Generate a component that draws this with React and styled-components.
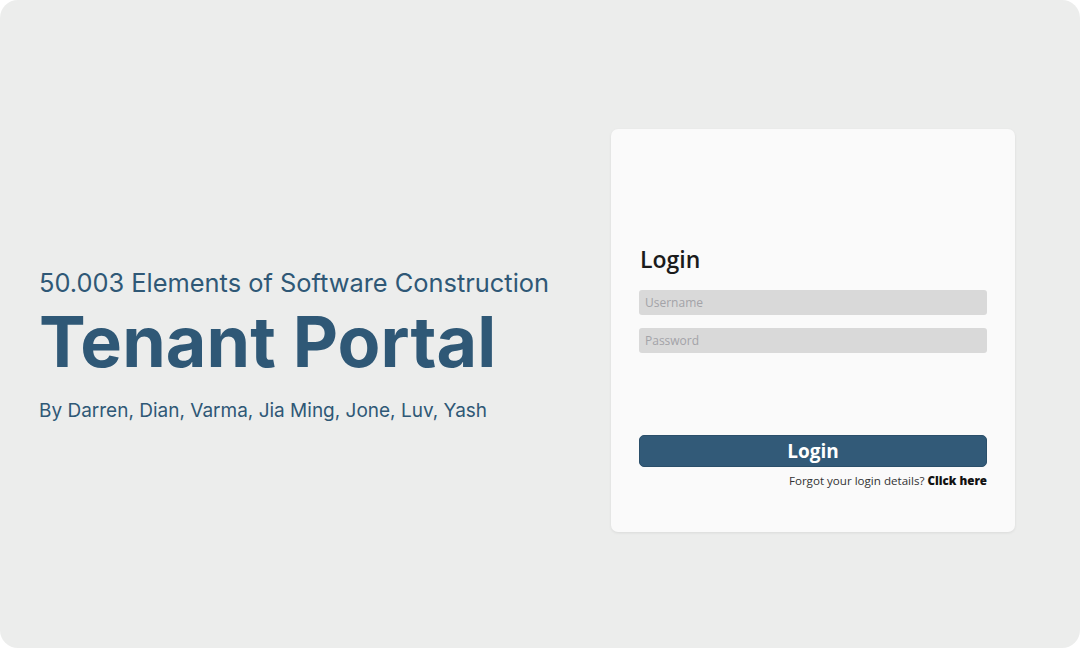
import React from 'react';
import styled, { createGlobalStyle } from 'styled-components';

const GlobalStyle = createGlobalStyle`
  html, body {
    margin: 0;
    padding: 0;
    background: #ffffff;
  }
  * {
    box-sizing: border-box;
  }
`;

const Page = styled.div`
  width: 1080px;
  height: 648px;
  background: #ecedec;
  border-radius: 18px;
  display: flex;
  align-items: center;
  justify-content: space-between;
  padding: 0 65px 0 39px;
  font-family: Inter, 'Liberation Sans', sans-serif;
  color: #2f5876;
`;

const Intro = styled.div`
  display: flex;
  flex-direction: column;
  margin-top: 48px;
`;

const Course = styled.div`
  font-size: 25.4px;
  line-height: 30px;
  margin-top: -6px;
`;

const Title = styled.h1`
  margin: 2px 0 0 0;
  font-size: 70px;
  line-height: 84px;
  font-weight: 700;
  letter-spacing: 0.1px;
`;

const Authors = styled.div`
  margin-top: 15px;
  font-size: 19px;
  line-height: 24px;
`;

const Card = styled.div`
  width: 404px;
  height: 403px;
  margin-top: 12px;
  background: #fafafa;
  border-radius: 7px;
  box-shadow: 0 1px 3px rgba(0, 0, 0, 0.08);
  padding: 115px 28px 0 28px;
  display: flex;
  flex-direction: column;
  font-family: 'Open Sans', 'Noto Sans', sans-serif;
`;

const Heading = styled.h2`
  margin: 0 0 16px 1px;
  font-size: 23px;
  line-height: 30px;
  font-weight: 600;
  color: #1b1b1b;
`;

const Field = styled.input`
  width: 100%;
  height: 25px;
  border: none;
  border-radius: 3px;
  background: #d9d9d9;
  padding: 0 6px;
  margin-bottom: ${p => p.$gap}px;
  font-family: 'Open Sans', 'Noto Sans', sans-serif;
  font-size: 12px;
  outline: none;
  &::placeholder {
    color: #a3a3a8;
  }
`;

const Button = styled.button`
  width: 100%;
  height: 32px;
  border: 1px solid #2b4f6a;
  border-radius: 5px;
  background: #325a78;
  color: #ffffff;
  font-family: 'Open Sans', 'Noto Sans', sans-serif;
  font-size: 19px;
  font-weight: 700;
  cursor: pointer;
`;

const Forgot = styled.div`
  margin-top: 6px;
  text-align: right;
  font-size: 11.6px;
  color: #333;
  b {
    color: #111;
    font-weight: 800;
  }
`;

export default function App() {
  return (
    <>
      <GlobalStyle />
      <Page>
        <Intro>
          <Course>50.003 Elements of Software Construction</Course>
          <Title>Tenant Portal</Title>
          <Authors>By Darren, Dian, Varma, Jia Ming, Jone, Luv, Yash</Authors>
        </Intro>
        <Card>
          <Heading>Login</Heading>
          <Field placeholder="Username" $gap={13} />
          <Field type="password" placeholder="Password" $gap={82} />
          <Button>Login</Button>
          <Forgot>
            Forgot your login details? <b>Click here</b>
          </Forgot>
        </Card>
      </Page>
    </>
  );
}
